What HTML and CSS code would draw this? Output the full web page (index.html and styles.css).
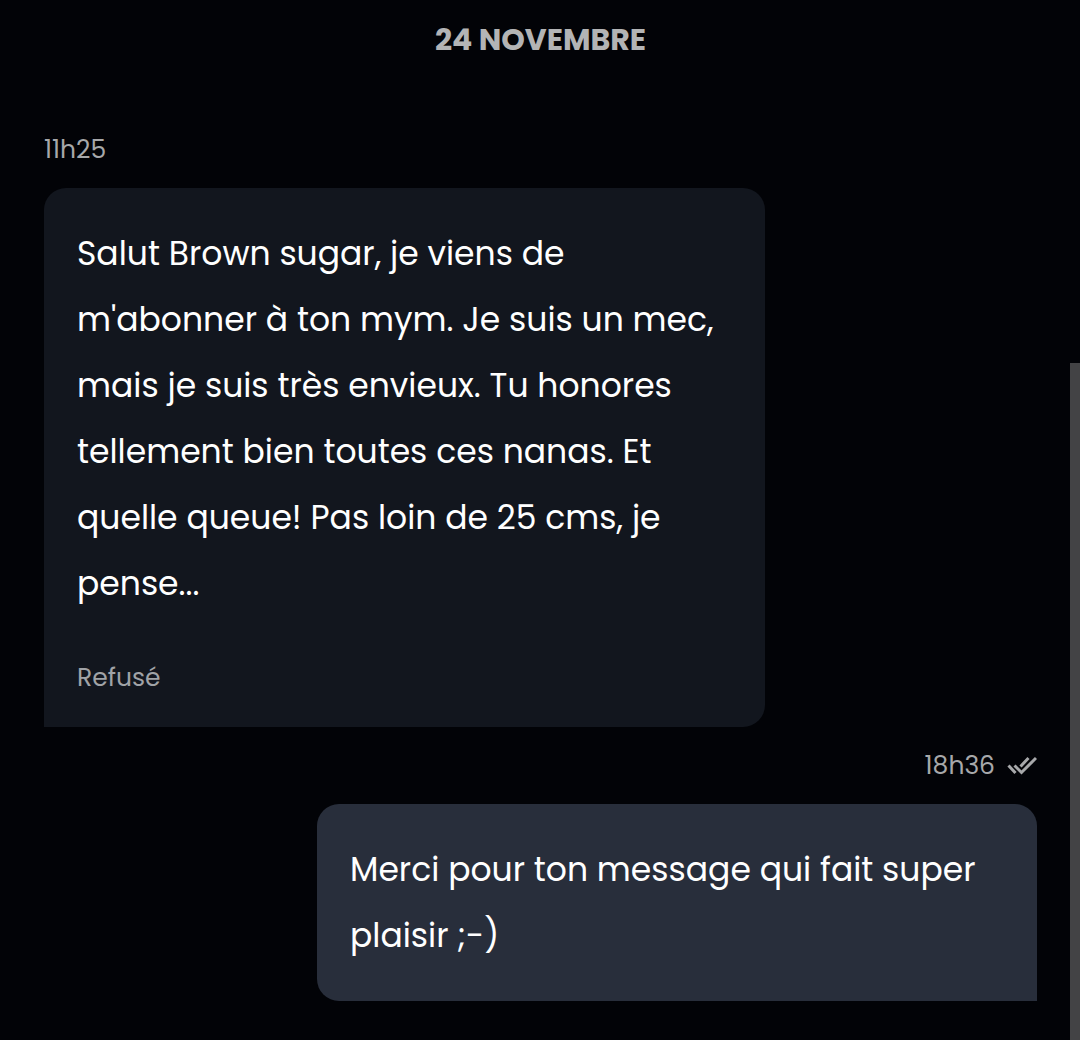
FILE: index.html
```html
<!DOCTYPE html>
<html lang="fr">
<head>
    <meta charset="utf-8">
    <meta name="viewport" content="width=device-width, initial-scale=1">
    <title>Messages</title>
    <link rel="stylesheet" href="styles.css">
</head>
<body>
<main class="chat">
    <h2 class="date">24 NOVEMBRE</h2>
    <div class="message received">
        <div class="meta"><time datetime="11:25">11h25</time></div>
        <div class="bubble">
            <p class="text">Salut Brown sugar, je viens de m'abonner à ton mym. Je suis un mec, mais je suis très envieux. Tu honores tellement bien toutes ces nanas. Et quelle queue! Pas loin de 25 cms, je pense...</p>
            <p class="status">Refusé</p>
        </div>
    </div>
    <div class="message sent">
        <div class="meta">
            <time datetime="18:36">18h36</time>
            <svg class="read" viewBox="0 0 30 20" aria-hidden="true">
                <path d="M1.5 9.5 L8.5 17 M7.5 9.5 L14.5 16.5 L29 2 M13.5 10.5 L21.5 2"/>
            </svg>
        </div>
        <div class="bubble">
            <p class="text">Merci pour ton message qui fait super plaisir ;-)</p>
        </div>
    </div>
</main>
<div class="scroll-thumb"></div>
</body>
</html>
```

FILE: styles.css
```css
*{margin: 0;padding: 0;box-sizing: border-box;}
body{background: #020307;color: #fff;font-family: Poppins, Inter, "Noto Sans", sans-serif;}
.chat{padding: 20px 43px 38px 44px;}
.date{font-size: 30px;line-height: 40px;font-weight: 700;text-align: center;color: #b3b4b5;margin-bottom: 70px;}
.message + .message{margin-top: 19px;}
.meta{display: flex;align-items: center;gap: 12px;font-size: 25px;line-height: 40px;color: #a7a8aa;margin-bottom: 18px;}
.read{width: 30px;height: 20px;fill: none;stroke: #a7a8aa;stroke-width: 3;}
.bubble{padding: 33px 33px 32px;border-radius: 22px;}
.text{font-size: 33px;line-height: 66px;}
.status{font-size: 25px;line-height: 34px;margin-top: 44px;color: #a0a3a7;}
.received{margin-right: 272px;}
.received .bubble{background: #12161e;border-bottom-left-radius: 0;}
.sent{margin-left: 273px;}
.sent .meta{justify-content: flex-end;}
.sent .bubble{background: #282e3b;border-bottom-right-radius: 0;}
/* scroll position, over the right edge of the window */
.scroll-thumb{position: fixed;top: 363px;right: 0;bottom: 0;width: 10px;background: #434345;}
```
